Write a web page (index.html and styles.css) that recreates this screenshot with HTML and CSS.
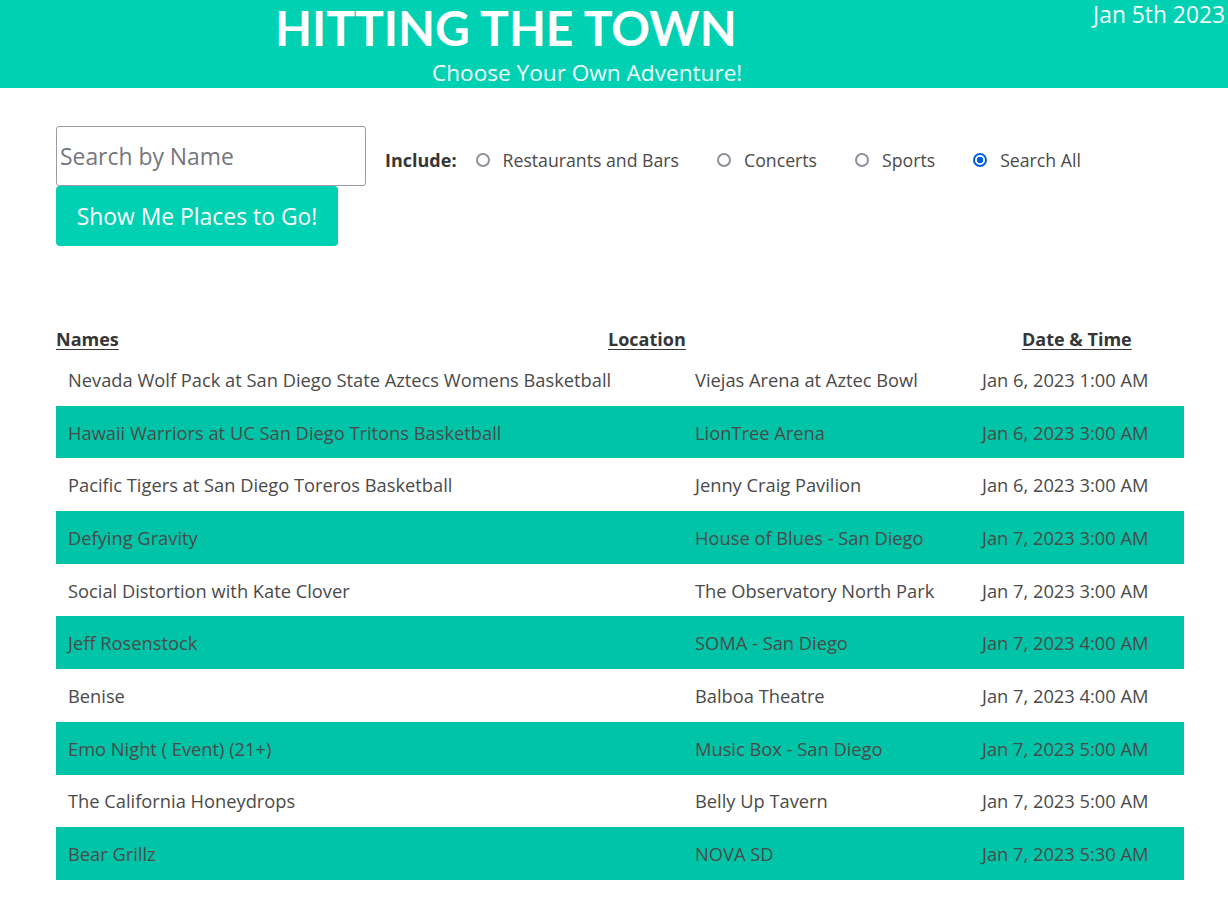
FILE: index.html
```html
<!DOCTYPE html>
<html lang="en">
<head>
<meta charset="utf-8">
<title>Hitting the Town</title>
<link rel="stylesheet" href="styles.css">
</head>
<body>
<header class="hero">
  <div class="brand">
    <h1 class="title">HITTING THE TOWN</h1>
    <p class="subtitle">Choose Your Own Adventure!</p>
  </div>
  <div class="today">Jan 5th 2023</div>
</header>

<main class="main">
  <form class="search">
    <div class="search-row">
      <input class="search-input" type="text" placeholder="Search by Name">
      <span class="include">Include:</span>
      <label class="choice"><input type="radio" name="cat"><span>Restaurants and Bars</span></label>
      <label class="choice"><input type="radio" name="cat"><span>Concerts</span></label>
      <label class="choice"><input type="radio" name="cat"><span>Sports</span></label>
      <label class="choice"><input type="radio" name="cat" checked><span>Search All</span></label>
    </div>
    <button class="go" type="button">Show Me Places to Go!</button>
  </form>

  <section class="results">
    <div class="heads">
      <span class="head head-name">Names</span>
      <span class="head head-loc">Location</span>
      <span class="head head-date">Date &amp; Time</span>
    </div>
    <table class="events">
      <colgroup>
        <col class="c-name">
        <col class="c-loc">
        <col class="c-date">
      </colgroup>
      <tbody>
        <tr><td>Nevada Wolf Pack at San Diego State Aztecs Womens Basketball</td><td>Viejas Arena at Aztec Bowl</td><td>Jan 6, 2023 1:00 AM</td></tr>
        <tr><td>Hawaii Warriors at UC San Diego Tritons Basketball</td><td>LionTree Arena</td><td>Jan 6, 2023 3:00 AM</td></tr>
        <tr><td>Pacific Tigers at San Diego Toreros Basketball</td><td>Jenny Craig Pavilion</td><td>Jan 6, 2023 3:00 AM</td></tr>
        <tr><td>Defying Gravity</td><td>House of Blues - San Diego</td><td>Jan 7, 2023 3:00 AM</td></tr>
        <tr><td>Social Distortion with Kate Clover</td><td>The Observatory North Park</td><td>Jan 7, 2023 3:00 AM</td></tr>
        <tr><td>Jeff Rosenstock</td><td>SOMA - San Diego</td><td>Jan 7, 2023 4:00 AM</td></tr>
        <tr><td>Benise</td><td>Balboa Theatre</td><td>Jan 7, 2023 4:00 AM</td></tr>
        <tr><td>Emo Night ( Event) (21+)</td><td>Music Box - San Diego</td><td>Jan 7, 2023 5:00 AM</td></tr>
        <tr><td>The California Honeydrops</td><td>Belly Up Tavern</td><td>Jan 7, 2023 5:00 AM</td></tr>
        <tr><td>Bear Grillz</td><td>NOVA SD</td><td>Jan 7, 2023 5:30 AM</td></tr>
      </tbody>
    </table>
  </section>
</main>
</body>
</html>
```

FILE: styles.css
```css
* { box-sizing: border-box; }

body {
  margin: 0;
  font-family: "Open Sans", Lato, sans-serif;
  color: #4a4a4a;
  background: #fff;
}

.hero {
  display: flex;
  height: 88px;
  background: #00d1b2;
  color: #fff;
}

.brand { flex: 1; }

.title {
  margin: 0;
  padding-left: 275px;
  font-family: Lato, "Open Sans", sans-serif;
  font-size: 48px;
  line-height: 56px;
  font-weight: 700;
  color: #fff;
}

.subtitle {
  margin: 0;
  padding-top: 1px;
  padding-left: 432px;
  font-size: 22.6px;
  line-height: 31px;
  color: #f2fffd;
}

.today {
  padding-right: 3px;
  font-size: 22.8px;
  line-height: 30px;
  color: #f2fffd;
}

.main {
  width: 1128px;
  margin-left: 56px;
}

.search { padding-top: 38px; }

.search-row {
  display: flex;
  align-items: center;
}

.search-input {
  width: 310px;
  height: 60px;
  margin: 0;
  padding: 0 3px;
  border: 1px solid #9b9ba3;
  border-radius: 3px;
  font-family: inherit;
  font-size: 22.9px;
  color: #363636;
}
.search-input::placeholder { color: #76767e; }

.include {
  margin: 7px 19px 0;
  font-size: 18px;
  font-weight: 700;
  color: #363636;
}

.choice {
  display: flex;
  align-items: center;
  margin: 7px 38px 0 0;
  font-size: 17.7px;
  color: #4a4a4a;
}
.choice input {
  appearance: none;
  -webkit-appearance: none;
  width: 14px;
  height: 14px;
  margin: 0 13px 0 0;
  border: 2px solid #8f8f9d;
  border-radius: 50%;
  background: #fff;
}
.choice input:checked {
  border-color: #0060df;
  background: radial-gradient(circle, #0060df 0 3px, #fff 3.6px);
}

.go {
  display: block;
  width: 282px;
  height: 60px;
  margin: 0;
  padding: 0;
  border: 0;
  border-radius: 4px;
  background: #00d1b2;
  color: #fff;
  font-family: inherit;
  font-size: 22.9px;
}

.results { padding-top: 79px; }

.heads {
  display: flex;
  height: 28px;
  align-items: center;
}
.head {
  font-size: 18px;
  font-weight: 700;
  color: #363636;
  text-decoration: underline;
  text-underline-offset: 3px;
}
.head-name { width: 552px; }
.head-loc { width: 414px; }

.events {
  width: 1128px;
  border-collapse: collapse;
  table-layout: fixed;
  font-size: 18.3px;
}
.c-name { width: 627px; }
.c-loc { width: 287px; }
.c-date { width: 214px; }

.events tr { height: 52.7px; }
.events td {
  padding: 0 12px;
  vertical-align: middle;
  white-space: nowrap;
}
.events tr:nth-child(even) { background: #00c4a7; }
```
